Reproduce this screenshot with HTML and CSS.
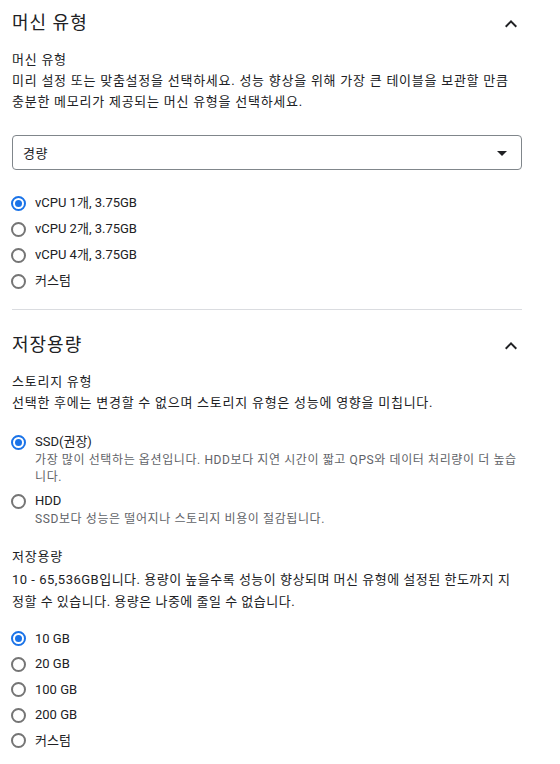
FILE: index.html
```html
<!DOCTYPE html>
<html lang="ko">
<head>
<meta charset="utf-8">
<title>머신 유형</title>
<link rel="stylesheet" href="styles.css">
</head>
<body>
<div class="page">
  <section class="panel">
    <div class="panel-head">
      <h2 class="panel-title">머신 유형</h2>
      <span class="chev"><svg viewBox="0 0 24 24" width="24" height="24"><path d="M12 8l-6 6 1.41 1.41L12 10.83l4.59 4.58L18 14z"/></svg></span>
    </div>
    <div class="field">
      <div class="label">머신 유형</div>
      <p class="desc">미리 설정 또는 맞춤설정을 선택하세요. 성능 향상을 위해 가장 큰 테이블을 보관할 만큼 충분한 메모리가 제공되는 머신 유형을 선택하세요.</p>
    </div>
    <div class="select">
      <span class="select-value">경량</span>
      <svg class="select-arrow" viewBox="0 0 24 24" width="24" height="24"><path d="M7 10l5 5 5-5z"/></svg>
    </div>
    <ul class="radios machine">
      <li class="radio-row"><span class="radio checked"></span><span class="radio-label">vCPU 1개, 3.75GB</span></li>
      <li class="radio-row"><span class="radio"></span><span class="radio-label">vCPU 2개, 3.75GB</span></li>
      <li class="radio-row"><span class="radio"></span><span class="radio-label">vCPU 4개, 3.75GB</span></li>
      <li class="radio-row"><span class="radio"></span><span class="radio-label">커스텀</span></li>
    </ul>
  </section>
  <hr class="divider">
  <section class="panel">
    <div class="panel-head">
      <h2 class="panel-title">저장용량</h2>
      <span class="chev"><svg viewBox="0 0 24 24" width="24" height="24"><path d="M12 8l-6 6 1.41 1.41L12 10.83l4.59 4.58L18 14z"/></svg></span>
    </div>
    <div class="field">
      <div class="label">스토리지 유형</div>
      <p class="desc">선택한 후에는 변경할 수 없으며 스토리지 유형은 성능에 영향을 미칩니다.</p>
    </div>
    <ul class="radios storage-type">
      <li class="radio-detail">
        <span class="radio checked"></span>
        <div class="detail-text">
          <div class="detail-label">SSD(권장)</div>
          <div class="detail-sub">가장 많이 선택하는 옵션입니다. HDD보다 지연 시간이 짧고 QPS와 데이터 처리량이 더 높습니다.</div>
        </div>
      </li>
      <li class="radio-detail">
        <span class="radio"></span>
        <div class="detail-text">
          <div class="detail-label">HDD</div>
          <div class="detail-sub">SSD보다 성능은 떨어지나 스토리지 비용이 절감됩니다.</div>
        </div>
      </li>
    </ul>
    <div class="field capacity">
      <div class="label">저장용량</div>
      <p class="desc wide">10 - 65,536GB입니다. 용량이 높을수록 성능이 향상되며 머신 유형에 설정된 한도까지 지정할 수 있습니다. 용량은 나중에 줄일 수 없습니다.</p>
    </div>
    <ul class="radios sizes">
      <li class="radio-row"><span class="radio checked"></span><span class="radio-label">10 GB</span></li>
      <li class="radio-row"><span class="radio"></span><span class="radio-label">20 GB</span></li>
      <li class="radio-row"><span class="radio"></span><span class="radio-label">100 GB</span></li>
      <li class="radio-row"><span class="radio"></span><span class="radio-label">200 GB</span></li>
      <li class="radio-row"><span class="radio"></span><span class="radio-label">커스텀</span></li>
    </ul>
  </section>
</div>
</body>
</html>
```

FILE: styles.css
```css
* { box-sizing: border-box; }
html, body { margin: 0; padding: 0; background: #fff; }
body {
  font-family: Roboto, "Noto Sans CJK KR", sans-serif;
  color: #202124;
  font-size: 13px;
}
.page {
  width: 510px;
  margin-left: 12px;
}
.panel-head {
  height: 44px;
  display: flex;
  align-items: center;
  justify-content: space-between;
}
.panel-title {
  margin: 0;
  font-weight: 400;
  font-size: 18px;
  line-height: 24px;
  letter-spacing: 1px;
  color: #202124;
  padding-top: 1px;
}
.chev {
  display: flex;
  width: 24px;
  height: 24px;
  margin-right: -1px;
  margin-top: 3px;
}
.chev svg { fill: #202124; }
.field { margin-top: 6px; }
.label {
  font-size: 13px;
  line-height: 20px;
  letter-spacing: 0.75px;
}
.desc {
  margin: 0;
  font-size: 13px;
  line-height: 21px;
  letter-spacing: 0.75px;
}
.desc.wide { line-height: 22px; margin-top: 2px; letter-spacing: 0.5px; }
.select {
  margin-top: 23px;
  height: 35px;
  border: 1px solid #80868b;
  border-radius: 4px;
  display: flex;
  align-items: center;
  justify-content: space-between;
  padding: 0 7px 0 10px;
}
.select-value { font-size: 13px; letter-spacing: 0.5px; }
.select-arrow { fill: #202124; }
.radios {
  list-style: none;
  margin: 0;
  padding: 0;
}
.radios.machine { margin-top: 20px; }
.radio-row {
  height: 26px;
  display: flex;
  align-items: center;
  gap: 9px;
}
.sizes .radio-row { height: 25.5px; }
.radio {
  flex: none;
  width: 15px;
  height: 15px;
  border: 2px solid #757575;
  border-radius: 50%;
  position: relative;
  margin-left: -1px;
}
.radio.checked { border-color: #1a73e8; }
.radio.checked::after {
  content: "";
  position: absolute;
  left: 2px;
  top: 2px;
  width: 7px;
  height: 7px;
  border-radius: 50%;
  background: #1a73e8;
}
.radio-label {
  font-size: 13px;
  line-height: 20px;
}
.divider {
  margin: 15px 0 0;
  border: 0;
  border-top: 1px solid #dadce0;
  height: 0;
}
.divider + .panel { margin-top: 12px; }
.storage-type {
  margin-top: 19px;
  display: flex;
  flex-direction: column;
  gap: 5px;
}
.radio-detail {
  display: flex;
  align-items: flex-start;
  gap: 9px;
}
.radio-detail .radio { margin-top: 3px; }
.detail-label {
  font-size: 13px;
  line-height: 20px;
}
.detail-sub {
  font-size: 12px;
  line-height: 17px;
  letter-spacing: 0.6px;
  color: #5f6368;
}
.capacity { margin-top: 19px; }
.sizes { margin-top: 13px; }
```
